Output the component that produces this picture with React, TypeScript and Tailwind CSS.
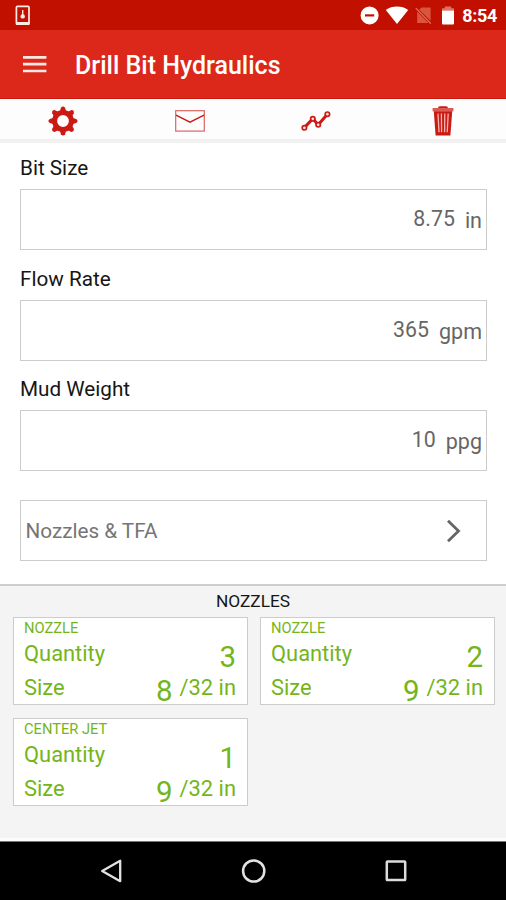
import React from "react";

const RED = "#cb1a13";

function StatusBar() {
  return (
    <div className="flex h-[30px] shrink-0 items-center bg-[#c21000] pl-[15px] pr-[9px] text-white">
      <svg className="mt-px" width="16" height="22" viewBox="0 0 16 22" fill="none" stroke="#ffe9e4">
        <rect x="1.4" y="1.4" width="12.6" height="17.8" rx="1" strokeWidth="1.7" />
        <path d="M1 18.4h13.4" strokeWidth="2.8" />
        <path d="M7.7 5v7" strokeWidth="1.4" />
        <circle cx="7.7" cy="11.4" r="2.2" fill="#ffe9e4" stroke="none" />
      </svg>
      <div className="ml-auto flex items-center">
        <svg width="20" height="20" viewBox="0 0 20 20">
          <circle cx="9.6" cy="10.4" r="9" fill="#fff" />
          <path d="M5 10.4h9.2" stroke="#c21000" strokeWidth="2.2" />
        </svg>
        <svg className="ml-[5px]" width="24" height="20" viewBox="0 0 24 20">
          <path d="M0.8 4.9C7 0.3 17 0.3 23.2 4.9L12 19z" fill="#fff" />
        </svg>
        <svg className="ml-[5px]" width="20" height="20" viewBox="0 0 20 20">
          <path d="M7.4 2.6h9.2v13.2L5.2 4.8z" fill="#d9553f" />
          <path d="M3.2 6.4v11.5h11.2z" fill="#d9553f" />
          <path d="M1.8 3.2L16.8 18.6" stroke="#e07a68" strokeWidth="1.2" />
        </svg>
        <svg className="ml-[7px]" width="14" height="20" viewBox="0 0 14 20">
          <path d="M1 5.6V3.2h2.8V1.4h6.4v1.8H13v2.4z" fill="#dd7264" />
          <path d="M1 5.4h12V18.4q0 1-1 1H2q-1 0-1-1z" fill="#fff" />
        </svg>
        <span className="ml-[7px] mt-[2px] text-[18px] font-bold leading-[20px] tracking-[-0.3px]">8:54</span>
      </div>
    </div>
  );
}

function Header() {
  return (
    <header className="flex h-[69px] shrink-0 items-center border-b border-[#c9170d] bg-[#db281b] pl-[23px] text-white">
      <svg width="24" height="18" viewBox="0 0 24 18" stroke="#ffe9e4" strokeWidth="2.7">
        <path d="M0 2.3h23.4M0 9.2h23.4M0 16h23.4" />
      </svg>
      <h1 className="ml-[28px] mt-[4px] text-[25px] font-medium leading-[30px]">Drill Bit Hydraulics</h1>
    </header>
  );
}

function GearIcon() {
  return (
    <svg width="30" height="30" viewBox="-15 -15 30 30" fill="none" stroke={RED}>
      <circle r="8.4" strokeWidth="5" />
      {[0, 45, 90, 135, 180, 225, 270, 315].map((a) => (
        <path key={a} transform={`rotate(${a})`} d="M-3.1-9.6L-2.1-13.2Q0-16 2.1-13.2L3.1-9.6z" fill={RED} stroke="none" />
      ))}
    </svg>
  );
}

function MailIcon() {
  return (
    <svg width="30" height="22" viewBox="0 0 30 22" fill="none" stroke={RED}>
      <rect x="0.7" y="0.7" width="28.6" height="20.4" strokeWidth="1.2" stroke="#dc655f" />
      <path d="M1 5.2L15 12.2L29 5.2" strokeWidth="1.4" />
    </svg>
  );
}

function ChartIcon() {
  return (
    <svg width="30" height="20" viewBox="0 0 30 20" fill="#fbe3e1" stroke={RED}>
      <path d="M3.4 16.6L11.8 7.8L17.2 13.8L26.4 3.2" strokeWidth="3" fill="none" />
      <g strokeWidth="1.7">
        <circle cx="3.4" cy="16.8" r="2.2" />
        <circle cx="11.8" cy="7.8" r="2.2" />
        <circle cx="17.2" cy="13.8" r="2.2" />
        <circle cx="26.4" cy="3.2" r="2.2" />
      </g>
    </svg>
  );
}

function TrashIcon() {
  return (
    <svg width="22" height="30" viewBox="0 0 22 30">
      <path d="M6 2.2Q6 0.2 8 0.2h6Q16 0.2 16 2.2z" fill={RED} />
      <path d="M0.6 2h20.8v3.4H0.6z" fill="#dc5a52" />
      <path d="M1.8 5.2h18.4L18.4 29.6H3.6z" fill={RED} />
      <path d="M6 7.6l1 18.6M9.4 7.6l.2 18.6M12.8 7.6l-.2 18.6M16.2 7.6l-1 18.6" stroke="#f3b5b0" strokeWidth="1.3" />
    </svg>
  );
}

function Toolbar() {
  return (
    <nav className="grid h-[44px] shrink-0 grid-cols-4 place-items-center border-b-[4px] border-[#f1f1f1] bg-[#fdfdfd] pt-[4px]">
      <GearIcon />
      <MailIcon />
      <ChartIcon />
      <TrashIcon />
    </nav>
  );
}

function Field({ label, value, unit }: { label: string; value: string; unit: string }) {
  return (
    <label className="block">
      <span className="block text-[20.7px] leading-[24px] text-[#161616]">{label}</span>
      <span className="mt-[9px] flex h-[61px] w-[467px] items-center justify-end border border-[#cccccc] pr-[4px] text-[#666]">
        <span className="mb-[1px] text-[21.3px] leading-[26px]">{value}</span>
        <span className="ml-[10px] mt-[3px] text-[21.5px] leading-[26px]">{unit}</span>
      </span>
    </label>
  );
}

function NozzleCard({ title, quantity, size }: { title: string; quantity: string; size: string }) {
  return (
    <div className="h-[88px] w-[235px] border border-[#cccccc] bg-white pl-[10px] pr-[11px] text-[21.9px] text-[#74b51b]">
      <div className="mt-[2px] text-[14.7px] leading-[17px]">{title}</div>
      <div className="flex h-[34px] justify-between">
        <span className="leading-[34px]">Quantity</span>
        <span className="mt-[2px] text-[29.5px] leading-[36px]">{quantity}</span>
      </div>
      <div className="flex h-[34px]">
        <span className="leading-[34px]">Size</span>
        <span className="ml-auto mt-[2px] text-[29.5px] leading-[36px]">{size}</span>
        <span className="ml-[7px] leading-[33px]">/32 in</span>
      </div>
    </div>
  );
}

function NavBar() {
  return (
    <div className="flex h-[58px] shrink-0 items-center bg-black pl-[100px] pr-[98px]">
      <div className="flex w-full items-center justify-between">
        <svg width="24" height="26" viewBox="0 0 24 26" fill="none" stroke="#e2e2e2" strokeWidth="2.3">
          <path d="M20.2 2.8v20.4L2.2 13z" strokeLinejoin="round" />
        </svg>
        <svg width="26" height="26" viewBox="0 0 26 26" fill="none" stroke="#e2e2e2" strokeWidth="2.5">
          <circle cx="12.7" cy="13" r="10.6" />
        </svg>
        <svg width="24" height="26" viewBox="0 0 24 26" fill="none" stroke="#dcdcdc" strokeWidth="2.5">
          <rect x="2.8" y="3.6" width="18.4" height="18.4" rx="0.6" />
        </svg>
      </div>
    </div>
  );
}

export default function App() {
  return (
    <div className="flex h-[900px] w-[506px] flex-col overflow-hidden bg-white font-['Roboto',sans-serif]">
      <StatusBar />
      <Header />
      <Toolbar />
      <main className="h-[441px] shrink-0 pl-[20px] pt-[13px]">
        <Field label="Bit Size" value="8.75" unit="in" />
        <div className="h-[17px]" />
        <Field label="Flow Rate" value="365" unit="gpm" />
        <div className="h-[16px]" />
        <Field label="Mud Weight" value="10" unit="ppg" />
        <button className="mt-[29px] flex h-[61px] w-[467px] items-center justify-between border border-[#cccccc] pl-[4.5px] pr-[25px] text-[20.7px] text-[#757575]">
          <span className="mt-[3px]">Nozzles &amp; TFA</span>
          <svg width="14" height="24" viewBox="0 0 14 24" fill="none" stroke="#666" strokeWidth="2.8">
            <path d="M1 1.8L11.5 12L1 22.2" />
          </svg>
        </button>
      </main>
      <section className="h-[254px] shrink-0 border-t-2 border-[#cdcdcd] bg-[#f4f4f4] pl-[13px]">
        <h2 className="mr-[13px] pt-[4px] text-center text-[17.3px] leading-[22px] text-[#161616]">NOZZLES</h2>
        <div className="mt-[5px] grid grid-cols-[235px_235px] gap-x-[12px] gap-y-[13px]">
          <NozzleCard title="NOZZLE" quantity="3" size="8" />
          <NozzleCard title="NOZZLE" quantity="2" size="9" />
          <NozzleCard title="CENTER JET" quantity="1" size="9" />
        </div>
      </section>
      <div className="h-[4px] shrink-0 border-b border-[#777] bg-[#fcfcfc]" />
      <NavBar />
    </div>
  );
}
